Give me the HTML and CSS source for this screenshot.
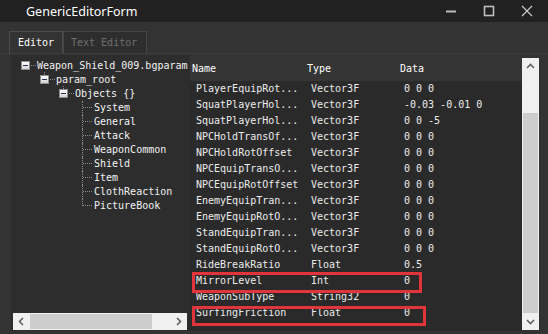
FILE: index.html
```html
<!DOCTYPE html>
<html lang="en">
<head>
    <meta charset="UTF-8">
    <title>GenericEditorForm</title>
    <link rel="stylesheet" href="styles.css">
</head>
<body>
    <div class="titlebar">
        <span class="title">GenericEditorForm</span>
        <div class="controls">
            <span class="ctl"><svg width="12" height="12" viewBox="0 0 12 12"><path d="M1 6.5h10" stroke="#bdbdbd" stroke-width="2"/></svg></span>
            <span class="ctl"><svg width="12" height="12" viewBox="0 0 12 12"><rect x="1.5" y="1.5" width="9" height="9" fill="none" stroke="#bdbdbd" stroke-width="1.6"/></svg></span>
            <span class="ctl"><svg width="12" height="12" viewBox="0 0 12 12"><path d="M1 1L11 11M11 1L1 11" stroke="#cfcfcf" stroke-width="1.1"/></svg></span>
        </div>
    </div>

    <div class="tabs">
        <div class="tab active">Editor</div>
        <div class="tab">Text Editor</div>
    </div>

    <div class="page">
        <div class="tree">
            <div class="nodes">
                <div class="node l0"><span class="gut open root"><span class="box"></span></span>Weapon_Shield_009.bgparam</div>
                <div class="node l1"><span class="gut open"><span class="box"></span></span>param_root</div>
                <div class="node l2"><span class="gut open"><span class="box"></span></span>Objects {}</div>
                <div class="node l3"><span class="gut leaf"></span>System</div>
                <div class="node l3"><span class="gut leaf"></span>General</div>
                <div class="node l3"><span class="gut leaf"></span>Attack</div>
                <div class="node l3"><span class="gut leaf"></span>WeaponCommon</div>
                <div class="node l3"><span class="gut leaf"></span>Shield</div>
                <div class="node l3"><span class="gut leaf"></span>Item</div>
                <div class="node l3"><span class="gut leaf"></span>ClothReaction</div>
                <div class="node l3"><span class="gut leaf last"></span>PictureBook</div>
            </div>
            <div class="hscroll">
                <span class="arrow"><svg width="9" height="9" viewBox="0 0 9 9"><path d="M6 1L2.5 4.5L6 8" fill="none" stroke="#606060" stroke-width="1.6"/></svg></span>
                <div class="hthumb"></div>
                <div class="htrack"></div>
                <span class="arrow"><svg width="9" height="9" viewBox="0 0 9 9"><path d="M3 1L6.5 4.5L3 8" fill="none" stroke="#606060" stroke-width="1.6"/></svg></span>
            </div>
        </div>

        <div class="list">
            <div class="grid">
                <div class="head"><span>Name</span><span>Type</span><span>Data</span></div>
                <div class="row"><span>PlayerEquipRot...</span><span>Vector3F</span><span>0 0 0</span></div>
                <div class="row"><span>SquatPlayerHol...</span><span>Vector3F</span><span>-0.03 -0.01 0</span></div>
                <div class="row"><span>SquatPlayerHol...</span><span>Vector3F</span><span>0 0 -5</span></div>
                <div class="row"><span>NPCHoldTransOf...</span><span>Vector3F</span><span>0 0 0</span></div>
                <div class="row"><span>NPCHoldRotOffset</span><span>Vector3F</span><span>0 0 0</span></div>
                <div class="row"><span>NPCEquipTransO...</span><span>Vector3F</span><span>0 0 0</span></div>
                <div class="row"><span>NPCEquipRotOffset</span><span>Vector3F</span><span>0 0 0</span></div>
                <div class="row"><span>EnemyEquipTran...</span><span>Vector3F</span><span>0 0 0</span></div>
                <div class="row"><span>EnemyEquipRotO...</span><span>Vector3F</span><span>0 0 0</span></div>
                <div class="row"><span>StandEquipTran...</span><span>Vector3F</span><span>0 0 0</span></div>
                <div class="row"><span>StandEquipRotO...</span><span>Vector3F</span><span>0 0 0</span></div>
                <div class="row"><span>RideBreakRatio</span><span>Float</span><span>0.5</span></div>
                <div class="row"><span>MirrorLevel</span><span>Int</span><span>0</span></div>
                <div class="row"><span>WeaponSubType</span><span>String32</span><span>0</span></div>
                <div class="row"><span>SurfingFriction</span><span>Float</span><span>0</span></div>
            </div>
            <div class="vscroll">
                <span class="arrow"><svg width="9" height="9" viewBox="0 0 9 9"><path d="M1 6L4.5 2.5L8 6" fill="none" stroke="#606060" stroke-width="1.6"/></svg></span>
                <div class="vtrack"></div>
                <div class="vthumb"></div>
                <span class="arrow"><svg width="9" height="9" viewBox="0 0 9 9"><path d="M1 3L4.5 6.5L8 3" fill="none" stroke="#606060" stroke-width="1.6"/></svg></span>
            </div>
            <div class="mark mark-mirror"></div>
            <div class="mark mark-surf"></div>
        </div>
    </div>
</body>
</html>
```

FILE: styles.css
```css
body {
    margin: 0;
    width: 548px;
    height: 334px;
    overflow: hidden;
    background: #333333;
    font-family: "DejaVu Sans Mono", monospace;
    font-size: 10px;
    color: #ececec;
}
.titlebar {
    height: 22px;
    background: #212121;
    display: flex;
    align-items: center;
}
.title {
    margin-left: 26px;
    font-family: "Noto Sans", sans-serif;
    font-size: 12.5px;
    color: #ffffff;
}
.controls {
    margin-left: auto;
    margin-right: 2px;
    display: flex;
}
.ctl {
    width: 38px;
    height: 22px;
    display: flex;
    align-items: center;
    justify-content: center;
}
.tabs {
    margin-top: 9px;
    padding-left: 9px;
    height: 22px;
    display: flex;
}
.tab {
    height: 21px;
    line-height: 21px;
    padding-left: 7px;
    width: 75px;
    color: #6e6e6e;
    background: #2e2e2e;
    border: 1px solid #464646;
    border-bottom: none;
    box-sizing: content-box;
}
.tab.active {
    width: 44px;
    padding-left: 8px;
    color: #ffffff;
    background: #333333;
    border-color: #4c4c4c;
}
.page {
    height: 276px;
    border-top: 1px solid #3d3d3d;
    padding: 1px 9px 4px 11px;
    display: flex;
}
.tree {
    width: 179px;
    background: #2d2d2d;
    display: flex;
    flex-direction: column;
}
.nodes {
    flex: 1;
    padding-top: 4px;
}
.node {
    height: 14px;
    line-height: 14px;
    display: flex;
    white-space: nowrap;
    color: #f2f2f2;
}
.l0 { padding-left: 10px; }
.l1 { padding-left: 29px; }
.l2 { padding-left: 48px; }
.l3 { padding-left: 67px; }
.gut {
    width: 16px;
    height: 14px;
    position: relative;
    flex: none;
}
.box {
    position: absolute;
    left: 0;
    top: 2px;
    width: 7px;
    height: 7px;
    border: 1px solid #8e8e8e;
    background: linear-gradient(#ffffff, #d4d4d4);
}
.box::after {
    content: "";
    position: absolute;
    left: 1px;
    top: 3px;
    width: 5px;
    height: 1px;
    background: #27355e;
}
.open::after {
    content: "";
    position: absolute;
    left: 10px;
    top: 6px;
    width: 5px;
    border-top: 1px dotted #8a8a8a;
}
.open::before {
    content: "";
    position: absolute;
    left: 4px;
    top: -1px;
    height: 3px;
    border-left: 1px dotted #8a8a8a;
}
.root::before {
    display: none;
}
.leaf::before {
    content: "";
    position: absolute;
    left: 4px;
    top: 0;
    height: 14px;
    border-left: 1px dotted #8a8a8a;
}
.leaf.last::before {
    height: 7px;
}
.leaf::after {
    content: "";
    position: absolute;
    left: 5px;
    top: 6px;
    width: 9px;
    border-top: 1px dotted #8a8a8a;
}
.hscroll {
    height: 17px;
    margin: 0 3px 1px 2px;
    background: #f0f0f0;
    display: flex;
}
.hscroll .arrow {
    width: 17px;
    display: flex;
    align-items: center;
    justify-content: center;
}
.hthumb {
    width: 122px;
    margin: 1px 0;
    background: #cdcdcd;
}
.htrack {
    flex: 1;
}
.list {
    flex: 1;
    position: relative;
    display: flex;
}
.grid {
    flex: 1;
    margin-top: 2px;
    background: #2a2a2a;
}
.head, .row {
    display: grid;
    grid-template-columns: 115px 93px 1fr;
    white-space: nowrap;
}
.head {
    height: 24px;
    line-height: 24px;
    background: #353535;
    color: #ffffff;
}
.head span {
    padding-left: 2px;
}
.row {
    height: 16px;
    line-height: 16px;
}
.row span {
    padding-left: 6px;
    overflow: hidden;
}
.vscroll {
    width: 17px;
    margin: 3px 0 1px;
    background: #f0f0f0;
    display: flex;
    flex-direction: column;
}
.vscroll .arrow {
    height: 17px;
    display: flex;
    align-items: center;
    justify-content: center;
}
.vtrack {
    height: 38px;
}
.vthumb {
    flex: 1;
    margin: 0 1px;
    background: #cdcdcd;
}
.mark {
    position: absolute;
    border: 3px solid #e2343b;
    box-sizing: border-box;
}
.mark-mirror {
    left: 2px;
    top: 217px;
    width: 230px;
    height: 21px;
}
.mark-surf {
    left: 2px;
    top: 251px;
    width: 234px;
    height: 20px;
}
```
